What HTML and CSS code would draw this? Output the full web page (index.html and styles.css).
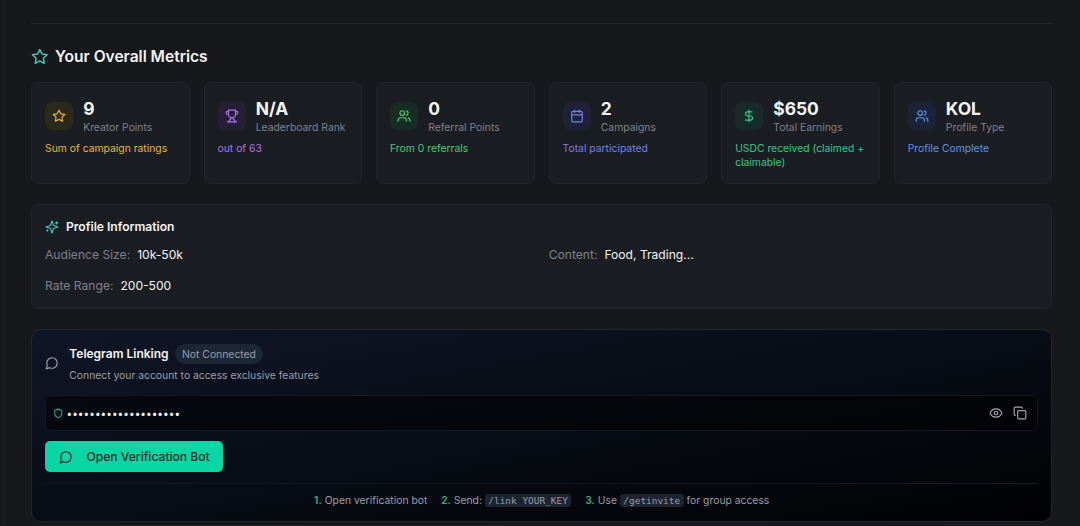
FILE: index.html
```html
<!DOCTYPE html>
<html lang="en">
<head>
  <meta charset="UTF-8" />
  <meta name="viewport" content="width=device-width, initial-scale=1.0"/>
  <title>Your Overall Metrics</title>
  <link rel="stylesheet" href="styles.css">
</head>
<body>
  <svg class="sprite" aria-hidden="true">
    <symbol id="star" viewBox="0 0 24 24">
      <path d="M12 2l3.09 6.26L22 9.27l-5 4.87 1.18 6.88L12 17.77l-6.18 3.25L7 14.14 2 9.27l6.91-1.01z"/>
    </symbol>
    <symbol id="trophy" viewBox="0 0 24 24">
      <path d="M6 9H4.5a2.5 2.5 0 0 1 0-5H6"/>
      <path d="M18 9h1.5a2.5 2.5 0 0 0 0-5H18"/>
      <path d="M4 22h16"/>
      <path d="M10 14.66V17c0 .55-.47.98-.97 1.21C7.85 18.75 7 20.24 7 22"/>
      <path d="M14 14.66V17c0 .55.47.98.97 1.21C16.15 18.75 17 20.24 17 22"/>
      <path d="M18 2H6v7a6 6 0 0 0 12 0V2z"/>
    </symbol>
    <symbol id="users" viewBox="0 0 24 24">
      <path d="M16 21v-2a4 4 0 0 0-4-4H6a4 4 0 0 0-4 4v2"/>
      <circle cx="9" cy="7" r="4"/>
      <path d="M22 21v-2a4 4 0 0 0-3-3.87"/>
      <path d="M16 3.13a4 4 0 0 1 0 7.75"/>
    </symbol>
    <symbol id="calendar" viewBox="0 0 24 24">
      <path d="M8 2v4M16 2v4M3 10h18"/>
      <rect x="3" y="4" width="18" height="18" rx="2"/>
    </symbol>
    <symbol id="dollar" viewBox="0 0 24 24">
      <path d="M12 2v20"/>
      <path d="M17 5H9.5a3.5 3.5 0 0 0 0 7h5a3.5 3.5 0 0 1 0 7H6"/>
    </symbol>
    <symbol id="sparkles" viewBox="0 0 24 24">
      <path d="M9.94 15.5A2 2 0 0 0 8.5 14.06l-6.14-1.58a.5.5 0 0 1 0-.96L8.5 9.94A2 2 0 0 0 9.94 8.5l1.58-6.14a.5.5 0 0 1 .96 0l1.58 6.14a2 2 0 0 0 1.44 1.44l6.14 1.58a.5.5 0 0 1 0 .96l-6.14 1.58a2 2 0 0 0-1.44 1.44l-1.58 6.14a.5.5 0 0 1-.96 0z"/>
      <path d="M20 3v4M22 5h-4M4 17v2M5 18H3"/>
    </symbol>
    <symbol id="message" viewBox="0 0 24 24">
      <path d="M7.9 20A9 9 0 1 0 4 16.1L2 22z"/>
    </symbol>
    <symbol id="shield" viewBox="0 0 24 24">
      <path d="M20 13c0 5-3.5 7.5-7.66 8.95a1 1 0 0 1-.67-.01C7.5 20.5 4 18 4 13V6a1 1 0 0 1 1-1c2 0 4.5-1.2 6.24-2.72a1.17 1.17 0 0 1 1.52 0C14.51 3.81 17 5 19 5a1 1 0 0 1 1 1z"/>
    </symbol>
    <symbol id="eye" viewBox="0 0 24 24">
      <path d="M2.06 12.35a1 1 0 0 1 0-.7 10.75 10.75 0 0 1 19.88 0 1 1 0 0 1 0 .7 10.75 10.75 0 0 1-19.88 0"/>
      <circle cx="12" cy="12" r="3"/>
    </symbol>
    <symbol id="copy" viewBox="0 0 24 24">
      <rect x="8" y="8" width="14" height="14" rx="2"/>
      <path d="M4 16c-1.1 0-2-.9-2-2V4c0-1.1.9-2 2-2h10c1.1 0 2 .9 2 2"/>
    </symbol>
  </svg>

  <main class="page">
    <h2 class="title"><svg class="icon"><use href="#star"/></svg>Your Overall Metrics</h2>

    <section class="metrics">
      <div class="metric yellow">
        <div class="metric-top">
          <span class="metric-icon"><svg class="icon"><use href="#star"/></svg></span>
          <div><div class="value">9</div><div class="label">Kreator Points</div></div>
        </div>
        <p class="note">Sum of campaign ratings</p>
      </div>
      <div class="metric purple">
        <div class="metric-top">
          <span class="metric-icon"><svg class="icon"><use href="#trophy"/></svg></span>
          <div><div class="value">N/A</div><div class="label">Leaderboard Rank</div></div>
        </div>
        <p class="note">out of 63</p>
      </div>
      <div class="metric green">
        <div class="metric-top">
          <span class="metric-icon"><svg class="icon"><use href="#users"/></svg></span>
          <div><div class="value">0</div><div class="label">Referral Points</div></div>
        </div>
        <p class="note">From 0 referrals</p>
      </div>
      <div class="metric indigo">
        <div class="metric-top">
          <span class="metric-icon"><svg class="icon"><use href="#calendar"/></svg></span>
          <div><div class="value">2</div><div class="label">Campaigns</div></div>
        </div>
        <p class="note">Total participated</p>
      </div>
      <div class="metric emerald">
        <div class="metric-top">
          <span class="metric-icon"><svg class="icon"><use href="#dollar"/></svg></span>
          <div><div class="value">$650</div><div class="label">Total Earnings</div></div>
        </div>
        <p class="note">USDC received (claimed + claimable)</p>
      </div>
      <div class="metric blue">
        <div class="metric-top">
          <span class="metric-icon"><svg class="icon"><use href="#users"/></svg></span>
          <div><div class="value">KOL</div><div class="label">Profile Type</div></div>
        </div>
        <p class="note">Profile Complete</p>
      </div>
    </section>

    <section class="profile">
      <h3><svg class="icon"><use href="#sparkles"/></svg>Profile Information</h3>
      <div class="profile-grid">
        <p><span>Audience Size:</span>10k-50k</p>
        <p><span>Content:</span>Food, Trading...</p>
        <p><span>Rate Range:</span>200-500</p>
      </div>
    </section>

    <section class="telegram">
      <div class="telegram-head">
        <svg class="icon"><use href="#message"/></svg>
        <div>
          <div class="telegram-title"><h3>Telegram Linking</h3><span class="badge">Not Connected</span></div>
          <p>Connect your account to access exclusive features</p>
        </div>
      </div>
      <div class="key">
        <svg class="icon key-shield"><use href="#shield"/></svg>
        <span class="key-text">••••••••••••••••••••</span>
        <svg class="icon"><use href="#eye"/></svg>
        <svg class="icon"><use href="#copy"/></svg>
      </div>
      <button class="open-bot" type="button"><svg class="icon"><use href="#message"/></svg>Open Verification Bot</button>
      <div class="steps">
        <span><b>1.</b> Open verification bot</span>
        <span><b>2.</b> Send: <code>/link YOUR_KEY</code></span>
        <span><b>3.</b> Use <code>/getinvite</code> for group access</span>
      </div>
    </section>
  </main>
</body>
</html>
```
FILE: styles.css
```css
* {
  box-sizing: border-box;
}
body {
  margin: 0;
  background: #17181c;
  color: #f4f4f5;
  font-family: Inter, "Liberation Sans", sans-serif;
  font-size: 12.1px;
  overflow: hidden;
}
h2, h3, p {
  margin: 0;
}
.sprite {
  display: none;
}
.icon {
  width: 14px;
  height: 14px;
  flex-shrink: 0;
  fill: none;
  stroke: currentColor;
  stroke-width: 2;
  stroke-linecap: round;
  stroke-linejoin: round;
}
.page {
  height: 526px;
  margin-left: 3px;
  padding: 23px 27.6px 0 27px;
  border-left: 1px solid #202327;
}
.title {
  display: flex;
  align-items: center;
  gap: 6.5px;
  height: 59px;
  padding-top: 7px;
  border-top: 1px solid #23262b;
  font-size: 15.55px;
  font-weight: 600;
}
.title .icon {
  width: 17.5px;
  height: 17.5px;
  color: #42c6b8;
}

/* metric cards */
.metrics {
  display: grid;
  grid-template-columns: repeat(6, 1fr);
  gap: 13.8px;
}
.metric {
  height: 102px;
  padding: 15px 13px 0;
  background: #1a1d21;
  border: 1px solid #21252a;
  border-radius: 7px;
}
.metric-top {
  display: flex;
  align-items: center;
  gap: 10.2px;
  white-space: nowrap;
}
.metric-icon {
  display: flex;
  align-items: center;
  justify-content: center;
  width: 28px;
  height: 28px;
  margin-bottom: 2px;
  border-radius: 7px;
}
.value {
  font-size: 17.4px;
  font-weight: 700;
  line-height: 22px;
}
.label {
  color: #7f828c;
  font-size: 10.35px;
  line-height: 15px;
}
.note {
  margin-top: 6px;
  font-size: 10.35px;
  line-height: 14px;
}
.yellow .icon, .yellow .note { color: #e9b92c; }
.yellow .metric-icon { background: #2b281c; }
.purple .icon, .purple .note { color: #af72ee; }
.purple .metric-icon { background: #251f35; }
.green .icon, .green .note { color: #43cc76; }
.green .metric-icon { background: #182b25; }
.indigo .icon, .indigo .note { color: #7880e8; }
.indigo .metric-icon { background: #1e2137; }
.emerald .icon, .emerald .note { color: #34c78e; }
.emerald .metric-icon { background: #182b29; }
.blue .icon, .blue .note { color: #5b97ea; }
.blue .metric-icon { background: #1a2436; }

/* profile */
.profile {
  height: 105px;
  margin-top: 20px;
  padding: 13px 13px 0;
  background: #1a1d21;
  border: 1px solid #21252a;
  border-radius: 7px;
}
.profile h3 {
  display: flex;
  align-items: center;
  gap: 7px;
  font-size: 12.1px;
  font-weight: 600;
  line-height: 17px;
}
.profile h3 .icon {
  color: #42c6b8;
}
.profile-grid {
  display: grid;
  grid-template-columns: 1fr 1fr;
  gap: 14px;
  margin-top: 10.5px;
  line-height: 17px;
}
.profile-grid span {
  margin-right: 7px;
  color: #7f828c;
}

/* telegram */
.telegram {
  height: 193px;
  margin-top: 20px;
  padding: 14px 13px 0;
  background: linear-gradient(to bottom right, #0f1626, #080c15 50%, #010102);
  border: 1px solid #20252e;
  border-radius: 10px;
}
.telegram-head {
  display: flex;
  align-items: center;
  gap: 10.3px;
  color: #9a9ea8;
}
.telegram-head p {
  margin-top: 4px;
  font-size: 10.35px;
  line-height: 14px;
}
.telegram-title {
  display: flex;
  align-items: center;
  gap: 6.5px;
}
.telegram-title h3 {
  color: #f4f4f5;
  font-size: 12px;
  font-weight: 600;
  line-height: 20px;
}
.badge {
  padding: 3px 7px;
  border-radius: 10px;
  background: #1c2635;
  font-size: 10.35px;
  line-height: 14px;
}
.key {
  display: flex;
  align-items: center;
  gap: 10.5px;
  height: 36px;
  margin-top: 13px;
  padding: 0 10px 0 7px;
  background: rgba(0, 0, 0, 0.5);
  border: 1px solid #14181f;
  border-radius: 7px;
  color: #a5a7ad;
}
.key-shield {
  width: 10.5px;
  height: 10.5px;
  color: #22b488;
  stroke-width: 2.3;
}
.key-text {
  flex: 1;
  margin-left: -7.5px;
  color: #f4f4f5;
  font-size: 10.1px;
}
.open-bot {
  display: flex;
  align-items: center;
  gap: 14px;
  height: 31px;
  margin-top: 10px;
  padding: 0 13.5px;
  background: #08d6a5;
  border: none;
  border-radius: 5px;
  color: #0b2a27;
  font: 500 12.1px Inter, "Liberation Sans", sans-serif;
}
.steps {
  display: flex;
  justify-content: center;
  gap: 13.8px;
  margin-top: 11px;
  padding-top: 9px;
  border-top: 1px solid #14191f;
  color: #9a9ea8;
  font-size: 10.35px;
  line-height: 14px;
}
.steps b {
  color: #22b488;
  font-weight: 600;
}
.steps code {
  padding: 1px 3.5px;
  border-radius: 3px;
  background: #1c2431;
  font-family: "DejaVu Sans Mono", monospace;
  font-size: 9.45px;
}
```
